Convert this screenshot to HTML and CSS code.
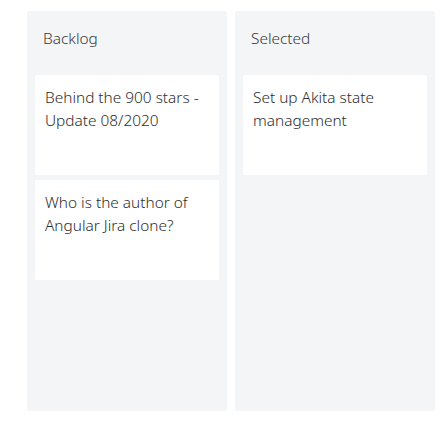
FILE: index.html
```html
<!DOCTYPE html>
<html lang="en">
<head>
  <meta charset="UTF-8">
  <title>Board</title>
  <link rel="stylesheet" href="styles.css">
</head>
<body>
  <div class="board">
    <div class="lane">
      <div class="lane-title">Backlog</div>
      <div class="cards">
        <div class="card">Behind the 900 stars - Update 08/2020</div>
        <div class="card">Who is the author of Angular Jira clone?</div>
      </div>
    </div>
    <div class="lane">
      <div class="lane-title">Selected</div>
      <div class="cards">
        <div class="card">Set up Akita state management</div>
      </div>
    </div>
  </div>
</body>
</html>
```

FILE: styles.css
```css
body {
  margin: 0;
  font-family: "Noto Sans", "Open Sans", sans-serif;
  font-size: 15.4px;
  font-weight: 300;
  color: #2e2e2e;
  background: #fff;
}
.board {
  display: flex;
  gap: 8px;
  padding: 11px 0 0 27px;
}
.lane {
  width: 200px;
  height: 400px;
  background: #f4f5f7;
  border-radius: 3px;
  padding: 0 8px;
  box-sizing: border-box;
}
.lane-title {
  height: 64px;
  padding: 17px 8px 0;
  box-sizing: border-box;
  line-height: 22px;
  color: #3a3a3a;
}
.cards {
  display: flex;
  flex-direction: column;
  gap: 5px;
}
.card {
  height: 100px;
  box-sizing: border-box;
  background: #fff;
  border-radius: 2px;
  padding: 11px 10px;
  line-height: 23px;
}
```
